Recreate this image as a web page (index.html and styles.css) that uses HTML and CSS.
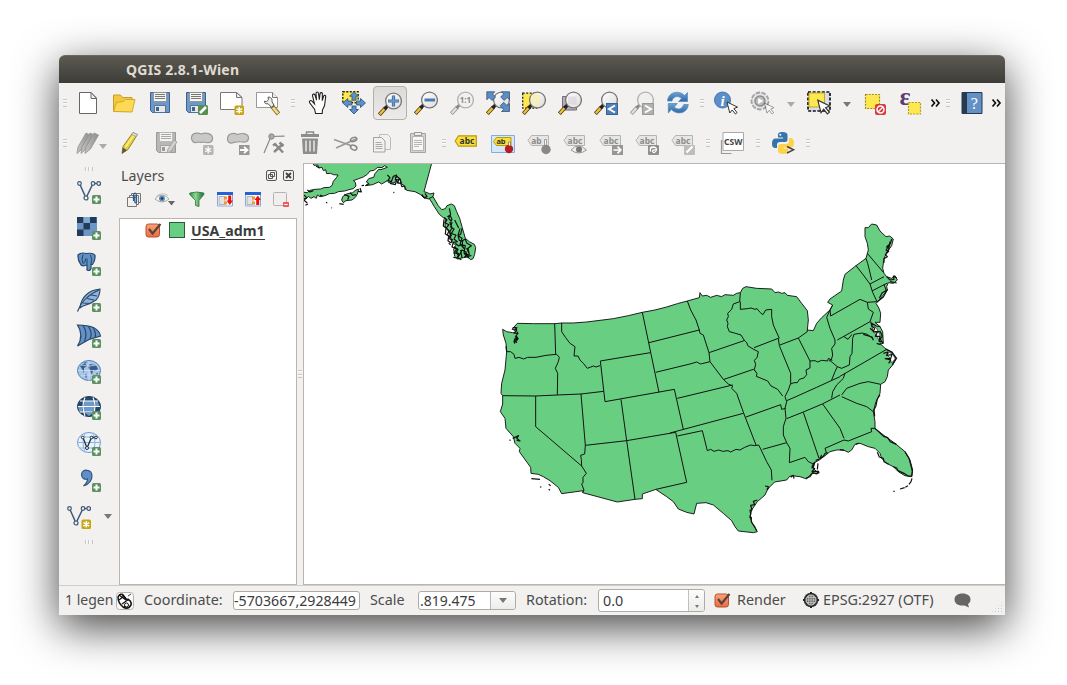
FILE: index.html
```html
<!DOCTYPE html>
<html lang="en">
<head>
<meta charset="utf-8">
<title>QGIS 2.8.1-Wien</title>
<link rel="stylesheet" href="styles.css">
</head>
<body>
<svg class="defs" width="0" height="0" aria-hidden="true">
  <defs>
    <linearGradient id="blue" x1="0" y1="0" x2="0" y2="1"><stop offset="0" stop-color="#6fa0d4"/><stop offset="1" stop-color="#2f69a8"/></linearGradient>
    <linearGradient id="glass" x1="0" y1="0" x2="1" y2="1"><stop offset="0" stop-color="#fff"/><stop offset="1" stop-color="#dcdcda"/></linearGradient>
    <linearGradient id="orange" x1="0" y1="0" x2="0" y2="1"><stop offset="0" stop-color="#f9a27c"/><stop offset="1" stop-color="#ea6c40"/></linearGradient>
    <linearGradient id="graypen" x1="0" y1="0" x2="1" y2="0"><stop offset="0" stop-color="#c4c4c4"/><stop offset="1" stop-color="#8c8c8c"/></linearGradient>
    <linearGradient id="funnel" x1="0" y1="0" x2="1" y2="0"><stop offset="0" stop-color="#2f8a3d"/><stop offset=".4" stop-color="#8ed694"/><stop offset="1" stop-color="#1e6c2e"/></linearGradient>
  </defs>
  <symbol id="plus" viewBox="0 0 24 24"><rect x="15" y="15" width="9" height="9" rx="1.5" fill="#5b9160"/><path d="M19.5 16.5v6M16.500 19.500h6" stroke="#fff" stroke-width="2"/></symbol>
  <symbol id="star" viewBox="0 0 24 24"><rect x="14.500" y="14.500" width="9.500" height="9.500" rx="1.500" fill="#c9a510"/><path d="M19.300 16v6.600M16.400 17.600l5.800 3.400M16.400 21l5.800-3.400" stroke="#fff" stroke-width="1.500"/></symbol>
  <symbol id="lens" viewBox="0 0 24 24"><path d="M1.300 22.700L7.500 16" stroke="#4a4020" stroke-width="4"/><path d="M1.800 22.200L6.500 17" stroke="#f3c033" stroke-width="2.400"/><path d="M6.500 17l3-3" stroke="#222" stroke-width="3.400"/><circle cx="15.500" cy="9" r="7.900" fill="url(#glass)" stroke="#777" stroke-width="1.300"/></symbol>
  <symbol id="lensg" viewBox="0 0 24 24"><path d="M1.300 22.700L7.500 16" stroke="#999" stroke-width="4"/><path d="M1.800 22.200L6.500 17" stroke="#ddd" stroke-width="2.400"/><path d="M6.500 17l3-3" stroke="#888" stroke-width="3"/><circle cx="15.500" cy="9" r="7.900" fill="#f0f0ef" stroke="#b0b0b0" stroke-width="1.300"/></symbol>
  <symbol id="vee" viewBox="0 0 24 24"><path d="M2.500 3.500L9 18 16 3.500h5.500" fill="none" stroke="#3d5a78" stroke-width="1.500"/><g fill="#f2f1f0" stroke="#3d5a78" stroke-width="1.200"><circle cx="2.500" cy="3.500" r="1.800"/><circle cx="9" cy="18" r="2"/><circle cx="16" cy="3.500" r="1.800"/><circle cx="21.700" cy="3.500" r="1.800"/></g></symbol>
  <symbol id="cursor" viewBox="0 0 12 14"><path d="M1 1l2.800 11 2.400-3 3.200 4 1.700-1.400-3.300-4 3.700-1.500z" fill="#fff" stroke="#333" stroke-width="1"/></symbol>
  <symbol id="gtag" viewBox="0 0 24 24"><path d="M1 8.500L4.500 3.500h17v10h-17z" fill="#e6e6e5" stroke="#b4b4b4"/></symbol>
  <symbol id="floppy" viewBox="0 0 24 24"><path d="M2.500 2.500h19v20H4.500l-2-2z" fill="#6d98c9" stroke="#3c6490"/><path d="M5.500 2.500h13v9h-13z" fill="#f6f6f2" stroke="#8a8a86" stroke-width=".8"/><path d="M7 4.500h10M7 6.500h10M7 8.500h10" stroke="#777" stroke-width="1"/><path d="M6.500 15.500h11v7h-11z" fill="#e8e8e6" stroke="#3c6490" stroke-width=".8"/><path d="M8 17h3v4H8z" fill="#3c6490"/></symbol>
  <symbol id="check" viewBox="0 0 17 16"><rect x="1" y="2" width="13.500" height="13" rx="2.500" fill="url(#orange)" stroke="#b55231"/><path d="M4 7l3.600 4.500L15.500 2" fill="none" stroke="#5a4037" stroke-width="2.100"/></symbol>
</svg>

<main class="window">
  <header class="titlebar">QGIS 2.8.1-Wien</header>

  <nav class="toolbar">
    <i class="grip first"></i>
    <span class="slot"><svg class="ic"><path d="M3.500 1.500h11.500l5.500 5.500v15.500h-17z" fill="#fff" stroke="#666"/><path d="M15 1.500v6h5.500z" fill="#eee" stroke="#666"/></svg></span>
    <span class="slot"><svg class="ic"><path d="M1.500 20.500v-16.500h7l2 2.500h9.500v14z" fill="#f2c93c" stroke="#c79f25"/><path d="M1.500 20.500l3-9 7-1 2-2h9.500l-3 12.500z" fill="#fdd956" stroke="#d4aa2c"/></svg></span>
    <span class="slot"><svg class="ic"><use href="#floppy" width="24" height="24" y="-1"/></svg></span>
    <span class="slot"><svg class="ic"><use href="#floppy" width="24" height="24" y="-1"/><rect x="14" y="14" width="10" height="10" rx="1.500" fill="#569050"/><path d="M16 22l6-6" stroke="#fff" stroke-width="2.600"/></svg></span>
    <span class="slot"><svg class="ic"><path d="M.5 1.500h16l5.500 5v12h-21.500z" fill="#fff" stroke="#777"/><path d="M16.500 1.500v5h5.500z" fill="#eee" stroke="#777"/><use href="#star" width="24" height="24"/></svg></span>
    <span class="slot"><svg class="ic"><path d="M.5 1.500h16l5 5v10h-21z" fill="#fff" stroke="#999"/><path d="M16.500 1.500v5h5" fill="#eee" stroke="#777"/><path d="M15.500 14.500l7 8.500" stroke="#8a7635" stroke-width="4.500"/><path d="M17 16.500l5 6" stroke="#f0dc8c" stroke-width="2.700"/><path d="M8.500 10.200l2 .5 2-2-.5-2.500c2.500-.5 4.500 1.500 4 4.500l2 3.500-2.500 2-3.500-3.500c-2 .5-4-.5-3.500-2.500z" fill="#eee" stroke="#444" stroke-width=".9"/></svg></span>
    <i class="grip wide"></i>
    <span class="slot"><svg class="ic hand"><path d="M7.500 22.500l-.8-4-5.200-7c-.6-1.700 1.300-2.600 2.500-1.300l2.500 2.600-2-8.200c0-1.800 2.100-1.900 2.500-.4l1.500 5-.5-7c.2-1.600 2.300-1.600 2.500 0l.8 6.600.8-6.300c.5-1.400 2.300-1 2.300.4l-.2 6.800 1.500-4.700c.6-1.200 2.200-.7 2 .8l-1.200 9-2 4-.3 3.700z" fill="#fff" stroke="#222" stroke-width="1.100"/></svg></span>
    <span class="slot"><svg class="ic"><path d="M0 0h16v12h-16z" fill="#fde84e"/><path d="M.8 .8h15.400v11h-15.400z" fill="none" stroke="#222" stroke-width="1.400" stroke-dasharray="2 1.500"/><g fill="#6090c8" stroke="#335a88" stroke-width=".9"><path d="M12 .7l4.500 4.500h-2.500v4h-4v-4h-2.500zM12 23l4.500-4.500h-2.500v-3.500h-4v3.500h-2.500zM.8 12l5-4.500v2.500h4v4h-4v2.500zM23.500 12l-5-4.500v2.500h-4v4h4v2.500z"/></g></svg></span>
    <span class="slot"><span class="active"><svg class="ic"><use href="#lens" width="24" height="24" y="1"/><path d="M15.500 4.500v11M10 10h11" stroke="#3e6ea5" stroke-width="3.200"/><path d="M15.500 5v10M10.500 10h10" stroke="#6d9bcf" stroke-width="1.500"/></svg></span></span>
    <span class="slot"><svg class="ic"><use href="#lens" width="24" height="24"/><path d="M10.500 9h10.500" stroke="#477bb4" stroke-width="3"/></svg></span>
    <span class="slot"><svg class="ic"><use href="#lensg" width="24" height="24"/><text x="15.500" y="12.300" class="t-one">1:1</text></svg></span>
    <span class="slot"><svg class="ic"><use href="#lens" width="24" height="24"/><g fill="#5e8cc2" stroke="#31567f" stroke-width=".8"><path d="M.8.800h8l-2.200 2.200 3 3-3.500 3.500-3-3-2.300 2.300zM23.500.800h-8l2.200 2.200-3 3 3.500 3.500 3-3 2.300 2.300zM23.500 20.500h-8l2.200-2.200-3.500-3.500 3.500-3.500 3.500 3.500 2.300-2.300z"/></g></svg></span>
    <span class="slot"><svg class="ic"><path d="M.7 2.200h14v15h-14z" fill="#fde84e" stroke="#222" stroke-width="1.300" stroke-dasharray="2 1.500"/><use href="#lens" width="24" height="24"/><path d="M9 5q4-5 9 0v9l-6 .5q-4-3-3-9z" fill="#f7f0a8" opacity=".7"/></svg></span>
    <span class="slot"><svg class="ic"><path d="M4.500 5.500h14v13.500h-14z" fill="#b6acbc" stroke="#766b80"/><use href="#lens" width="24" height="24"/><path d="M10 5.500h8.500v8h-8.500z" fill="#cfc6d3" opacity=".45"/></svg></span>
    <span class="slot"><svg class="ic"><use href="#lens" width="24" height="24"/><rect x="12.500" y="12.500" width="11" height="11" fill="#4c80b8" stroke="#386290"/><path d="M21 14.500l-6 3.500 6 3.500" fill="none" stroke="#fff" stroke-width="2"/></svg></span>
    <span class="slot"><svg class="ic"><use href="#lensg" width="24" height="24"/><rect x="12.500" y="12.500" width="11" height="11" fill="#b1b1b0" stroke="#999"/><path d="M15 14.500l6 3.500-6 3.500" fill="none" stroke="#fff" stroke-width="2"/></svg></span>
    <span class="slot"><svg class="ic"><path d="M1.500 10c.5-9 11.500-11.500 17-5.500l3-3v9h-9l3-3c-3.500-3.500-8.500-2-9.500 2.500z" fill="url(#blue)" stroke="#5287be" stroke-width=".7"/><path d="M22.300 13.500c-.5 9-11.500 11-17 5l-3 3.500v-9.500h9l-3 3.500c3.500 3.500 8 2 9.500-2.500z" fill="url(#blue)" stroke="#5287be" stroke-width=".7"/></svg></span>
    <i class="grip"></i>
    <span class="slot"><svg class="ic"><circle cx="8.500" cy="9" r="8" fill="#5b8fc9" stroke="#447ab2"/><text x="8.500" y="14.500" class="t-info">i</text><use href="#cursor" x="12" y="10" width="12" height="14"/></svg></span>
    <span class="slot"><svg class="ic"><circle cx="10" cy="10" r="8.500" fill="#e4e4e3" stroke="#a3a3a3" stroke-width="1.800" stroke-dasharray="4.500 1.400"/><circle cx="10" cy="10" r="5" fill="#bbb" stroke="#8d8d8d" stroke-width="1.500"/><path d="M8.200 7l5 3-5 3z" fill="#fff"/><use href="#cursor" x="13.500" y="11" width="11" height="13" opacity=".5"/></svg></span>
    <span class="drop pale"></span>
    <span class="slot sel"><svg class="ic"><path d="M1 1h22v19h-22z" fill="#dadde8" stroke="#111" stroke-width="1.700" stroke-dasharray="3 1.600"/><path d="M2 2h15.500v14h-15.500z" fill="#fde84e" stroke="#c1aa29"/><use href="#cursor" x="9" y="8" width="15" height="16"/></svg></span>
    <span class="drop"></span>
    <span class="slot"><svg class="ic"><path d="M2.500 3.500h14v14h-14z" fill="#fde84e" stroke="#9f8a1e" stroke-width="1.200" stroke-dasharray="2 1.200"/><rect x="12" y="13" width="11" height="11" rx="2" fill="#d93a3a"/><circle cx="17.500" cy="18.500" r="3.500" fill="none" stroke="#fff" stroke-width="1.500"/><path d="M15 21l5-5" stroke="#fff" stroke-width="1.300"/></svg></span>
    <span class="slot"><svg class="ic"><text x="6" y="13.500" class="t-eps">ε</text><path d="M9.500 11.500h12v11.500h-12z" fill="#fde84e" stroke="#b29b28" stroke-width="1.200" stroke-dasharray="2 1.200"/></svg></span>
    <svg class="more" viewBox="0 0 13 10"><path d="M2.500 1.500l3 3.500-3 3.500M7 1.500l3 3.500-3 3.500" fill="none" stroke="#111" stroke-width="1.700"/></svg>
    <i class="grip"></i>
    <span class="slot"><svg class="ic"><path d="M2 1.500h20v21h-20z" fill="#6390c5" stroke="#253a52"/><path d="M2 1.500h5v21h-5z" fill="#273b50"/><text x="14.300" y="17.500" class="t-help">?</text></svg></span>
    <svg class="more" viewBox="0 0 13 10"><path d="M2.500 1.500l3 3.500-3 3.500M7 1.500l3 3.500-3 3.500" fill="none" stroke="#111" stroke-width="1.700"/></svg>
  </nav>

  <nav class="toolbar">
    <i class="grip first"></i>
    <span class="slot"><svg class="ic"><g fill="url(#graypen)" stroke="#929292" stroke-width=".8"><path d="M1 22.500l1-6.500 8-14 4 2-8 14z"/><path d="M5 22.500l1-6.500 8-14 4 2-8 14z"/><path d="M9 22.500l1-6.500 8-14 4.500 2-8 14z"/></g></svg></span>
    <span class="drop pen pale"></span>
    <span class="slot"><svg class="ic"><path d="M4 22.500l1-7L15 1.500l4.500 2-9.500 15z" fill="#e5cf3c" stroke="#8b7a22" stroke-width=".9"/><path d="M7.500 16L17 2.500" stroke="#fbf08f" stroke-width="1.500"/><path d="M15 1.500l4.500 2-1.300 2-4.500-2z" fill="#ddd" stroke="#999" stroke-width=".7"/><path d="M4 22.500l.8-6 4.200 2.700z" fill="#555"/></svg></span>
    <span class="slot"><svg class="ic gray"><use href="#floppy" width="24" height="24" y="-1"/><path d="M13 22l1-4 6-9 3 2-6 9z" fill="#bbb" stroke="#777"/></svg></span>
    <span class="slot"><svg class="ic"><path d="M1.500 7c0-5.500 6-5.500 10-4 4-1.500 11-1 11 4.500 0 5-5 4.500-9 3.500-4 1-5-.5-7 .5-3 .5-5-1.500-5-4.500z" fill="#c9c9c8" stroke="#999" stroke-width="1.200"/><rect x="13" y="14" width="10.500" height="10" rx="1.500" fill="#b4b4b4"/><path d="M18.200 15.500v7M15.200 17.200l6 3.500M15.200 20.700l6-3.500" stroke="#fff" stroke-width="1.300"/></svg></span>
    <span class="slot"><svg class="ic"><path d="M1.500 8c0-6 6-6.500 10-4.500 5-2 11-1 11 3.500 0 5-5 4.500-9 3.500-4 1-5 .5-7 1.500-3 .5-5-1-5-4z" fill="#c9c9c8" stroke="#999" stroke-width="1.200"/><rect x="13" y="14" width="10.500" height="10" fill="#979797"/><path d="M14 19h7M18 15.800l3.500 3.200-3.500 3.200" fill="none" stroke="#fff" stroke-width="1.800"/></svg></span>
    <span class="slot"><svg class="ic"><path d="M2 22L9 5.500l13.500-.3" fill="none" stroke="#888" stroke-width="1.200"/><circle cx="9.500" cy="5.500" r="2.700" fill="#aaa" stroke="#888"/><path d="M13 13l8 8.500M21 13l-9 8" stroke="#888" stroke-width="2.400"/><path d="M17.500 11.500l4 3.500M11 14.500l3-2" stroke="#888" stroke-width="2.600"/></svg></span>
    <span class="slot"><svg class="ic"><path d="M8.500 3V1h7v2" fill="none" stroke="#8b8b8b" stroke-width="1.500"/><path d="M3 3h18v3h-18zM4 7.500h16l-1 15.500h-14z" fill="#8d8d8d"/><path d="M8 9.500v11M12 9.500v11M16 9.500v11" stroke="#ddd" stroke-width="1.700"/></svg></span>
    <span class="slot"><svg class="ic"><path d="M0 8.500l18 6.500M2 17L22 8" stroke="#999" stroke-width="1.700"/><ellipse cx="19.500" cy="8.500" rx="3.300" ry="2" fill="none" stroke="#888" stroke-width="1.500" transform="rotate(-20 19.500 8)"/><ellipse cx="19.500" cy="16.500" rx="3.300" ry="2.300" fill="none" stroke="#888" stroke-width="1.500" transform="rotate(25 19.500 17)"/></svg></span>
    <span class="slot"><svg class="ic"><g fill="#f1f1f0" stroke="#bbb"><path d="M9.500 3.500h8l3 3v12h-11z"/><path d="M3.500 6.500h8l3.500 3.500v11h-11.500z" stroke="#a2a2a2"/></g><path d="M5.500 11.500h6M5.500 13.500h7M5.500 15.500h7M5.500 17.500h7" stroke="#aaa"/></svg></span>
    <span class="slot"><svg class="ic"><path d="M4.500 2.500h15v19h-15z" fill="#d2d2d1" stroke="#a5a5a5"/><path d="M6.500 5.500h11v14h-11z" fill="#f7f7f6" stroke="#b5b5b5"/><path d="M8.500 4.500v-3h7v3z" fill="#eee" stroke="#999"/><path d="M8 9.500h8M8 11.500h8M8 13.500h8M8 15.500h5" stroke="#b5b5b5"/></svg></span>
    <i class="grip labels-grip"></i>
    <span class="slot"><svg class="ic"><path d="M1.200 10L4.500 4.800h17.800v10.400h-17.800z" fill="#f8df39" stroke="#b79a0c" stroke-width="1.200"/><text x="13" y="12.700" class="t-abc">abc</text></svg></span>
    <span class="slot shift"><svg class="ic"><path d="M.5 4.500h23v17h-23z" fill="#d8e7f8" stroke="#7daee6"/><path d="M2.500 10.500l3-4h14.500v8h-14.500z" fill="#f8df39" stroke="#b79a0c"/><text x="10" y="13.300" class="t-abc sm">ab</text><circle cx="18" cy="18" r="4.200" fill="#b61f22"/><path d="M17.500 14v-3h2v4" fill="#fff" stroke="#7b6d2c" stroke-width=".7"/></svg></span>
    <span class="slot"><svg class="ic"><use href="#gtag" width="24" height="24" y="1"/><text x="9.500" y="12.500" class="t-abc g">ab</text><path d="M17.500 15V8.500h2v7" fill="#fff" stroke="#888" stroke-width=".8"/><circle cx="19" cy="18.500" r="4.700" fill="#888"/></svg></span>
    <span class="slot"><svg class="ic"><use href="#gtag" width="24" height="24" y="1"/><text x="12" y="12.500" class="t-abc g">abc</text><path d="M8 19q7-8 15.500 0-8 6-15.500 0z" fill="#eee" stroke="#999"/><circle cx="16" cy="18.500" r="3" fill="#777"/></svg></span>
    <span class="slot"><svg class="ic"><use href="#gtag" width="24" height="24" y="1"/><text x="12" y="12.500" class="t-abc g">abc</text><rect x="13" y="14" width="11" height="10" fill="#969696"/><path d="M14.500 19h7M18.500 15.700l3.300 3.300-3.300 3.300" fill="none" stroke="#fff" stroke-width="1.700"/></svg></span>
    <span class="slot"><svg class="ic"><use href="#gtag" width="24" height="24" y="1"/><text x="12" y="12.500" class="t-abc g">abc</text><rect x="13" y="14" width="11" height="10" rx="1" fill="#8e8e8e"/><path d="M15.500 20.500q-1-4 3-4.500 4 .5 2.500 4-2 3-3.500.5 0-2 3-1.500M15 17.500l2-2" fill="none" stroke="#fff" stroke-width="1.300"/></svg></span>
    <span class="slot"><svg class="ic"><use href="#gtag" width="24" height="24" y="1"/><text x="12" y="12.500" class="t-abc g">abc</text><rect x="13" y="14" width="11" height="10" rx="1" fill="#bdbdbd"/><path d="M15.500 21.500l6-6" stroke="#fff" stroke-width="2.200"/></svg></span>
    <i class="grip wide"></i>
    <span class="slot"><svg class="ic"><path d="M1.500 9.500h-1v13h10" fill="none" stroke="#999" stroke-width="1.200"/><path d="M2 1.500h20.500v18h-20.500z" fill="#fff" stroke="#aaa"/><text x="12.300" y="13.500" class="t-csw">CSW</text></svg></span>
    <i class="grip wide"></i>
    <span class="slot"><svg class="ic"><path d="M11.500 1c-4 0-4.500 1.500-4.500 3v2.500h5v1h-7.500c-2.500 0-3.500 2-3.500 5s1 4.500 3.500 4.500h1.500v-3q0-3 3-3h5q2.500 0 2.500-2.500v-4.500c0-2-2-3-5-3z" fill="#3774ab"/><circle cx="9.300" cy="3.700" r="1" fill="#fff"/><path d="M12.500 23c-4 0-5.500-1-5.500-3v-4q0-3 3-3h5q3 0 3-3v-3h1.500c2.500 0 3.500 2 3.500 5s-1 4.500-3.500 4.500h-7v1h5v2.500c0 2-2 3-5 3z" fill="#fdd34a"/><path d="M16 15.500l6.500 3.300-6.500 3.200" fill="none" stroke="#444" stroke-width="1.500"/></svg></span>
    <i class="grip wide"></i>
  </nav>

  <div class="body">
    <aside class="sidebar">
      <i class="vgrip"></i>
      <span class="vslot"><svg class="ic"><use href="#vee" width="24" height="24"/><use href="#plus" width="24" height="24"/></svg></span>
      <span class="vslot"><svg class="ic"><path d="M0 1h20v19h-20z" fill="#6c96c5"/><path d="M0 1h6.500v6h-6.500zM13 1h6.500v6h-6.500zM6.500 7h6.500v6.500h-6.500zM0 13.500h6.500v6.500h-6.500z" fill="#233b5b"/><path d="M6.500 1h6.500v6h-6.500z" fill="#7fa7d1"/><use href="#plus" width="24" height="24"/></svg></span>
      <span class="vslot"><svg class="ic"><path d="M1 3q3-3 8-1.500 8-1 9 2 .5 5-2.500 9l-1.500 0v4q-1 3-4 1.500v-5l-2 .5q-2 1-4-.5Q.5 8 1 3z" fill="#6190c5" stroke="#27466b" stroke-width="1.200"/><path d="M6 2.500q-2 5 0 9 3-1 2.500-5M13.500 3q2 4 .5 9M10 6.500v6" fill="none" stroke="#27466b"/><use href="#plus" width="24" height="24"/></svg></span>
      <span class="vslot"><svg class="ic"><path d="M3 20C4 9 12 2 23 1c0 5-1 8-4 11-4 3-9 5-13 6z" fill="#8fb3db" stroke="#2a4868" stroke-width="1.100"/><path d="M.5 23.500C3 16 10 7 22 2M6 15l7 .5M10 10.500l7 1.500M14 7l6 1" fill="none" stroke="#2a4868" stroke-width="1.200"/><use href="#plus" width="24" height="24"/></svg></span>
      <span class="vslot"><svg class="ic"><path d="M.5 1C12 1 22 4 23.500 12L12 15.500.5 22C5 15 5 8 .5 1z" fill="#6591c4" stroke="#27466b" stroke-width="1.200"/><path d="M6 1.500q5 7 1.500 16M11.500 2.500q4.500 7 1.500 12.500M16.500 4.500q3 5 1.500 9" fill="none" stroke="#27466b" stroke-width="1.200"/><use href="#plus" width="24" height="24"/></svg></span>
      <span class="vslot"><svg class="ic"><ellipse cx="12" cy="10.500" rx="11.500" ry="10" fill="#a8c5e5" stroke="#5180b4"/><path d="M3 6l5-3 2 3-3 2 0 5-2-4zM12 4l7 1 2 4-3 2-2-1-1 5-2-5-2-2zM8 14l2 1-1 4zM19 13l2 0-1 2zM6 3l3-1 1 1z" fill="#375f8d"/><path d="M12 1v20M1 10.500h22M4 5q8 2 16 0M4 16q8-2 16 0" fill="none" stroke="#d5e4f4" stroke-width=".7"/><use href="#plus" width="24" height="24"/></svg></span>
      <span class="vslot"><svg class="ic"><ellipse cx="12" cy="10.500" rx="11.500" ry="10" fill="#27486e" stroke="#1e3854"/><path d="M7 5h10v5h-10zM6.500 11h11v5h-11zM8 17h8l-4 3zM1 11h4.500v5h-3zM18.500 5h2l2 5h-4z" fill="#6d9acb"/><path d="M1 10.500h22M3 5h18M3 16h18M8 1.500Q4 10 8 20M16 1.500Q20 10 16 20" fill="none" stroke="#fff" stroke-width="1.100"/><use href="#plus" width="24" height="24"/></svg></span>
      <span class="vslot"><svg class="ic"><ellipse cx="12" cy="10.500" rx="11.500" ry="10" fill="#eaf2fb" stroke="#6c9bd0"/><path d="M1 10.500h22M3 5h18M3 16h18M8 1.500Q4 10 8 20M16 1.500Q20 10 16 20" fill="none" stroke="#8eb4dd"/><path d="M6 5.500L10 16l4.500-10.500h5" fill="none" stroke="#1f3043" stroke-width="1.300"/><g fill="#fff" stroke="#1f3043"><circle cx="5.700" cy="5.500" r="1.300"/><circle cx="10" cy="16" r="1.500"/><circle cx="14.500" cy="5.500" r="1.300"/><circle cx="19" cy="5.500" r="1.300"/></g><use href="#plus" width="24" height="24"/></svg></span>
      <span class="vslot"><svg class="ic"><path d="M4.500 6.500c0-6 10.500-6 10.500 1.500 0 5-4 8.500-8.500 10 3-2.500 4-4.500 4-7-3 1-6-1-6-4.500z" fill="#5e8fc8" stroke="#2d5078" stroke-width="1.100"/><use href="#plus" width="24" height="24"/></svg></span>
      <span class="vslot menu"><svg class="ic"><use href="#vee" width="24" height="24"/><use href="#star" width="24" height="24"/></svg><b class="tri"></b></span>
      <i class="vgrip low"></i>
    </aside>

    <section class="dock">
      <div class="dock-title"><span>Layers</span>
        <svg class="dbtn" viewBox="0 0 11 11"><rect x=".5" y=".5" width="10" height="10" rx="1.500" fill="none" stroke="#555"/><path d="M4.500 2.500h4v4h-4zM2.500 4.500h4v4h-4z" fill="none" stroke="#555"/></svg>
        <svg class="dbtn" viewBox="0 0 11 11"><rect x=".5" y=".5" width="10" height="10" rx="1.500" fill="none" stroke="#555"/><path d="M3 3l5 5M8 3l-5 5" stroke="#444" stroke-width="1.900"/></svg>
      </div>
      <div class="dock-tools">
        <svg viewBox="0 0 20 16"><g fill="#f2f1f0" stroke="#777"><path d="M6.500 1.500h9v9h-9z"/><path d="M4.500 3.500h9v9h-9z"/><path d="M2.500 5.500h9v9h-9z"/></g><path d="M8.500 9V3q1.500-4 3 0v7q-1 2-1.700 0V4" fill="none" stroke="#295b91" stroke-width="1.200"/></svg>
        <svg class="eye" viewBox="0 0 20 16"><path d="M0 7q7-8 14 0-7 6-14 0z" fill="#f6f6f6" stroke="#aaa"/><path d="M1 4.500q6-5 12-1" fill="none" stroke="#c5c3c0"/><circle cx="7" cy="6.500" r="3" fill="#6790bb"/><circle cx="7" cy="6.500" r="1.300" fill="#1e3a55"/><path d="M13 9h7l-3.500 4.500z" fill="#666"/></svg>
        <svg class="filter" viewBox="0 0 20 16"><path d="M2 1.500q8-2 16 0v1.500l-5.500 6v6l-4-1v-5l-6.500-6z" transform="translate(1 -.5) scale(.88 1)" fill="url(#funnel)" stroke="#22713a" stroke-width=".8"/></svg>
        <svg viewBox="0 0 20 16"><path d="M2.500 .5h15v13.500h-15z" fill="#fdfdfd" stroke="#8ba9d8"/><path d="M2 0h16v3h-16z" fill="#2563d4"/><path d="M4 4.500h6v8h-6z" fill="#e3e3e3" stroke="#999" stroke-width=".7"/><path d="M9 4.500h3v3h-3zM9 9.500h3v3h-3z" fill="#f59533"/><path d="M14.700 3.500v6" stroke="#e81010" stroke-width="3"/><path d="M11.500 8.500h6.500l-3.200 4.500z" fill="#e81010"/></svg>
        <svg viewBox="0 0 20 16"><path d="M2.500 .5h15v13.500h-15z" fill="#fdfdfd" stroke="#8ba9d8"/><path d="M2 0h16v3h-16z" fill="#2563d4"/><path d="M4 4.500h6v8h-6z" fill="#e3e3e3" stroke="#999" stroke-width=".7"/><path d="M9 4.500h3v3h-3zM9 9.500h3v3h-3z" fill="#f59533"/><path d="M14.700 7v6" stroke="#e81010" stroke-width="3"/><path d="M11.500 8h6.500l-3.200-4.500z" fill="#e81010"/></svg>
        <svg viewBox="0 0 20 16"><rect x="2.500" y=".5" width="13" height="13" rx="1" fill="#f0efee" stroke="#b4b3b1"/><rect x="12" y="10" width="6" height="5" rx="1" fill="#ed5353"/><path d="M13.200 12.500h3.600" stroke="#fff" stroke-width="1.200"/></svg>
      </div>
      <div class="tree"><div class="layer"><svg class="chk"><use href="#check" width="17" height="16"/></svg><i class="swatch"></i><span class="lname">USA_adm1</span></div></div>
    </section>

    <div class="splitter"><i class="grip"></i></div>

    <section class="canvas">
      <svg class="map" viewBox="304 164 701 420">
        <!-- Alaska -->
        <g transform="translate(300 160) scale(.33333)" class="land">
          <path d="M36 6L42 16 53 15 57 24 66 22 70 32 77 29 80 41 92 40 100 44 114 45 110 52 100 64 96 77 88 82 72 83 62 87 45 88 30 91 22 98 6 96V116L20 115 25 109 33 115 42 110 49 115 52 105 60 110 75 107 88 101 104 100 115 95 134 93 150 88 160 86 168 78 166 67 160 62 176 56 190 51 202 43 210 33 222 31 233 22 246 23 254 17 262 22 243 29 236 28 225 41 221 52 206 56 199 66 206 70 196 77 218 74 236 66 245 72 262 62 266 68 282 69 289 60 285 53 293 50 301 58 302 70 312 76 320 91 345 95 362 104 372 114 387 117 399 110 402 99 390 102 382 98 372 95 396 6z"/>
          <path d="M388 115l11-5 16 27 10 12 11-3 5-9 13-5 9 5 7 18 9 20 7 25 10 35 12 10 15 8 4 10-3 20-5 13-7 3-9-8-13 2-18 4-8-8-3-21 6-12-13-13-5-24-14-21 1-20-18-15-15-23z"/>
          <path d="M128 110l12-8 18-4 10-8 8-2-4 14-6 10-10 8-18 2-8 6-5-8z"/>
          <g class="scribble">
            <path d="M433 172l8 8-6 8 12 6-8 10 8 8-5 12 10 8-2-18 6-10-6-16 6-10-6-12-8 4M448 145l4 18-6 12 10 12-4 14 10 6-8 14 14 4-6 12 10 8-12 2-4 14 14 6-8 12 14 2-4 12 12 6M432 178l-2 20 8 6-2 18 10 6-2 14 8 6M486 205l-4 18-8 4 4 14 10 2-2 16 8 8M455 225l-10 10 12 4-4 10M480 205l-6 22 12 8-6 18 16 4-4 22 10 4-8 8 14-8-4-18 10-8-14-8-4-12-10 6M462 260l12 8-6 10 10 8 8-16 12 6 4 14 12-4M464 180l12 24M460 292l12 2M466 250l10 8 10-4 6 12M470 272l6 20M482 270l4 24M492 280l14 14M500 264l8 18M446 250l6 4"/>
            <path d="M262 45l8 8-6 8 10 4 6-16 10-4-4 14 12-2-6 12 12 0-4-12-12-10M270 70l16 4 4-14 8 12M12 105l8 8-8 8 10 8M16 136l8-4M118 131l13 2M79 126l2 4M94 143l2 1M280 98l3-1M133 103l14 6-4 10M150 98l8 8 10-2M180 84l4 12-10-2M185 77l7-1M200 75l8-4M302 70l4 10 8-2 2 12M365 103l8 10 8-3-6-10M22 90l8 6 10-4M58 24l-10-6M60 105l8 4"/>
          </g>
        </g>
        <!-- Contiguous states -->
        <g transform="translate(490 280) scale(.33333)" class="land">
          <path d="M38 148L50 155 68 158 84 161 78 150 66 148 75 138 82 130 130 131 195 131 215 129 250 129 290 126 330 121 370 116 415 107 457 97 495 90 530 81 562 71 592 63 628 53 630 38 637 48 650 46 662 52 680 46 695 50 705 44 730 46 740 40 751 38 758 25 768 20 800 25 845 27 855 38 865 36 875 40 885 38 892 46 920 50 935 70 952 92 955 120 952 150 970 152 980 130 995 113 1020 90 1028 75 1013 67 1020 57 1055 33 1060 0 1065-17 1098-43 1128-65 1135-90 1132-110 1125-130 1125-157 1135-157 1145-168 1160-165 1170-147 1188-130 1199-132 1210-123 1205-103 1192-85 1182-65 1178-35 1182-20 1190-10 1205-5 1215-13 1222 0 1210 10 1195 8 1190 20 1192 30 1180 45 1168 60 1158 70 1167 85 1172 100 1170 127 1155 127 1170 140 1178 155 1180 190 1170 190 1185 205 1200 213 1220 235 1208 255 1195 270 1192 290 1185 305 1172 313 1170 340 1158 365 1150 395 1155 425 1155 445 1180 465 1215 490 1245 515 1260 540 1268 570 1265 590 1245 587 1225 575 1210 560 1190 550 1175 535 1170 520 1155 505 1135 500 1110 490 1095 493 1085 510 1075 517 1060 510 1040 510 1020 515 1008 525 988 540 970 550 970 565 985 580 965 580 950 597 930 590 906 587 898 590 890 600 854 606 840 620 832 630 825 645 802 665 785 690 780 712 787 730 802 755 790 758 745 753 735 740 725 722 700 700 670 675 648 668 620 670 612 702 590 697 565 687 550 665 530 650 500 630 498 628 457 642 457 656 435 658 382 666 278 638 280 632 215 641 205 622 180 602 160 590 145 583 123 580 122 562 88 515 90 505 75 490 70 470 48 445 45 415 31 395 38 372 38 347 33 340 35 310 45 270 50 215 48 190 40 165z"/>
        </g>
        <g transform="translate(490 280) scale(.33333)" class="border">
          <path d="M50 215l12 0 10 8 3 12 12-3 14 5 12-5 25 0 30-6 32-3 8 9-3 13-9 20 7 15-1 65M194 131l3 92M215 129l0 26 12 18 13 17 15 10-3 28 12 0 6 12 10 10 12 15 18-7 8 3 12-4M331 243l150-25M457 97l50 240M331 243l14 122 208-37M38 347l99 1 66-3 70-3 68-8M137 348v92l138 118 14 22-10 12 0 16-4 4 7 18-4 8M273 342l13 154-2 26-12 4 2 12 1 20M286 496l124-14 147-25M393 358l17 124 25 176M553 328l27 120M557 457l33 150-92 21M477 188l151-38M497 277l103-25 20-6 12 6 28-7"/>
          <path class="scribble" d="M68 143l10 0 2 8-8 8 12 0-8 12 8 4-10 6 6 6-8-4 2 8M72 152l10-10M72 178l10-4M78 165l6 12-8 10M50 215l-2-16M68 475l18-8-6 8 10 8-10-2M58 480l4 1M124 596l26 2M150 620l4 2M176 613l6 4M176 628l4 3"/>
        </g>
        <g transform="translate(670 280) scale(.33333)" class="border">
          <path d="M52 63l10 27 16 30 10 30 2 10 10 5 17 53 3 27 15 20 25 33 15 14 13 6-3 7 15 15 22 62 36 93M117 218l108-37M162 298l88-30 10 10M211 38l-2 27-19 7-5 16-12 12 2 10-5 10 4 10-2 10 6 15 15 4 20 6 10 16 8 8 2 8 16 10 16 8-4 18-8 8 4 12-4 16 8 12-2 8 34 14 10 15 20 10 15 20M211 65v23l22-2 10-2 12 4 6-2 10 12 8 6 8-14 18-2 0 22 5 25 18 40M252 203l73-28 3 22 34 83 0 30-7 20-10 20M330 195l55-21 27-19 0-5M385 174l35 69M362 312l10-4 10 0 6-10 14-4 8-10-2-14 12-6 0-21 15-1 8 4 12-5 18 2 2-8 12 6M22 355l166-40M0 459l220-59M228 411l104-37 3 14 12-3M22 468l75-16 15 60 10-4 10 6 14-4 12 4 16-2 8 4 16-8 12 2 14-8 18-7 12 2 12-2 6 12 18 38 14 25 2 31M278 508l72-20M345 350l5 15-5 20 3 30-8 25 0 25 10 23 10 17-2 43 47-16 10 13 15 7M350 362l28-12 62-28 70-32M350 416l50-20 57-24 53-27M400 397l30 88 17 50"/>
          <path class="scribble" d="M432 548l-6 12 8 6-8 8 20 0-6 8-12-4-8 12-12 4M444 550l-2 18M285 618l10 2-4 10M262 660l-12 4 4 10-12 2 4 14-6 0 2 12-2 10 4 0 0 14 10 14 6 12M455 525l-6 12-12 4M362 592l8-6 2 10"/>
        </g>
        <g transform="translate(780 215) scale(.33333)" class="border">
          <path d="M158 270l-8 15-10 22 10 33 15 35 0 12-10 13 3 20-4 14-6 4M150 285l2 18 88-50 22 9M172 375l98-55 10-28-15-10-3-20 28-2M228 152l22 28 20 27 8 25 12 26M258 130l5 15 5 20 7 30M262 115l48 57M270 207l42-22M276 228l46-24M312 208l6 17M180 484l140-81M195 475l-5 15-20 20-12 20-3 20M155 495l10-25 7-15-24-20M172 455l13 5 23-10 2-25 6-10 2-45 4-12 24-4 16 4 18 14M192 365l12 8 12-15M185 540l15-20 40-15 25-5 37 8M185 545l45 20 30 10 20 15M128 567l52 73 12 30M135 700l57-25 13 3 70-28-2-10 12 0M135 700l5 15"/>
          <path class="white" d="M274 328l16 12 10 20-2 20-6-16-12-14zM328 412l12 8 6 12-12 12-4-16-10-8z"/>
          <path class="scribble" d="M318 95l6 2-6 8 8 4-10 10 6 6-10 6 0 12M335 72l-4 14-8 6 4 8M330 80l-4 24-8 12M320 185l10 10 12-2-2-10 10 6M330 200l20 4M290 262l20-16 12-22-16 10-8 16M272 320l4 14 8 6-4 10 12 2-6 12 14 0-2 16 10 0M275 325l14 8 12 2M285 350l16 0 6 14-6 8 8 14M270 340l12 10M290 385l12 4M310 415l14-4-4 10 16-2-4 12-16 0 16 4-6 10M318 403l18 8 13 18-12 20M300 540l-8 12-4 20-6 12 2 20M285 640l26 24 12 4 8 12 18 8M292 712l6 14 12 4 2 10 14 8M375 710l12 20 8 30 2 10-2 14M340 755l10 4 4 8 18 8 12 8 10 0M360 822l14-4M376 817l8-5M387 808l6-8 3-10M340 829l4 0M120 730l10-6 6-10 8 0M105 740l-4 14-6 6M110 768l8 6M228 688l8-4M180 704l12 2M250 358l26 8 4 10"/>
        </g>
      </svg>
    </section>
  </div>

  <footer class="status">
    <span class="st legend">1 legen</span>
    <svg class="mouse" viewBox="0 0 18 18"><rect x=".5" y=".5" width="17" height="17" rx="3" fill="#fafafa" stroke="#b5b2ae"/><path d="M2 5q2-4 5-2l3 4q6 1 5 6-3 5-8 2-5-4-5-10z" fill="#fff" stroke="#111" stroke-width="1.500"/><path d="M3 3l7 5M6 2l4 5M3 8l5-4M6 12l7-5M8 15l4-3" stroke="#111" stroke-width="1.300"/><circle cx="10.500" cy="13" r="2" fill="#fff" stroke="#111"/><path d="M12 4l3-2" stroke="#444"/></svg>
    <span class="st coord">Coordinate:</span>
    <span class="field coordf">-5703667,2928449</span>
    <span class="st scale">Scale</span>
    <span class="field combo"><span class="num">.819.475</span><span class="cbtn"><b class="tri"></b></span></span>
    <span class="st rot">Rotation:</span>
    <span class="field spin"><span class="val">0.0</span><span class="arrows"><b class="up"></b><b class="down"></b></span></span>
    <svg class="chk rchk"><use href="#check" width="17" height="16"/></svg>
    <span class="st render">Render</span>
    <svg class="crs" viewBox="0 0 16 16"><circle cx="8" cy="8" r="7.300" fill="#333"/><circle cx="8" cy="8" r="5" fill="#666" stroke="#eee" stroke-width=".8"/><path d="M8 3v10M3 8h10M4 5.500h8M4 10.500h8M5.700 4v8M10.300 4v8" stroke="#ddd" stroke-width=".6"/><path d="M0 8h2M14 8h2M8 0v2M8 14v2" stroke="#222" stroke-width="2"/></svg>
    <span class="st epsg">EPSG:2927 (OTF)</span>
    <svg class="bubble" viewBox="0 0 17 15"><path d="M8.500 .5c5 0 8 2.500 8 6 0 2-1 3.500-2.500 4.500l1 3.500-4.500-2c-7 .8-10-2.500-10-6s3-6 8-6z" fill="#666"/></svg>
    <i class="resize"></i>
  </footer>
</main>
</body>
</html>
```
FILE: styles.css
```css
* { box-sizing: border-box; }
body {
  margin: 0;
  width: 1067px;
  height: 685px;
  overflow: hidden;
  background: #fff;
  padding: 55px 0 0 59px;
  font-family: "Noto Sans", "Open Sans", sans-serif;
  font-size: 14px;
  color: #4c4c4c;
}
.defs { display: block; height: 0; }
svg { flex: none; display: block; overflow: visible; }
.window {
  width: 946px;
  height: 560px;
  display: flex;
  flex-direction: column;
  background: #f2f1f0;
  border-radius: 6px 6px 0 0;
  box-shadow: 0 12px 44px rgba(0, 0, 0, .74);
}
.titlebar {
  height: 28px;
  flex: none;
  padding-left: 67px;
  border-radius: 6px 6px 0 0;
  background: linear-gradient(#5c5a52, #3d3c37);
  border-top: 1px solid #6a685f;
  color: #dfdbd2;
  font-weight: 700;
  font-size: 14px;
  letter-spacing: .25px;
  line-height: 28px;
}
.toolbar { display: flex; height: 40px; flex: none; align-items: center; }
.slot { width: 36px; flex: none; display: flex; justify-content: center; }
.sel { width: 35px; }
.shift { margin-left: 1px; }
.ic { width: 24px; height: 24px; }
.hand { margin-left: 3px; }
.gray { filter: grayscale(1); opacity: .6; }
.grip { width: 12px; height: 9px; flex: none; display: flex; justify-content: center; }
.grip::before {
  content: "";
  width: 4px;
  height: 8px;
  background: repeating-linear-gradient(#c9c7c3 0 1px, #fbfbfa 1px 2px, transparent 2px 3.500px);
}
.grip.first { width: 11px; }
.grip.wide { width: 14px; }
.grip.labels-grip { padding-left: 3px; }
.active {
  width: 34px;
  height: 34px;
  margin: -5px -2px;
  flex: none;
  display: flex;
  align-items: center;
  justify-content: center;
  border: 1px solid #b3b0ab;
  border-radius: 4px;
  background: linear-gradient(#dddbd8, #ecebe9);
}
.drop { width: 21px; display: flex; justify-content: center; padding-top: 2px; }
.drop::before, .tri {
  content: "";
  width: 0;
  height: 0;
  border: 4px solid transparent;
  border-top: 5px solid #777;
  border-bottom: 0;
}
.drop.pale::before { border-top-color: #aaa; }
.drop.pen { width: 6px; margin-left: -6px; margin-right: 6px; padding-top: 6px; }
.more { width: 13px; height: 10px; }
.t-one { font: 700 8px "Noto Sans", sans-serif; text-anchor: middle; fill: #888; }
.t-info { font: italic 700 15px "Liberation Serif", serif; text-anchor: middle; fill: #fff; }
.t-eps { font: 700 26px "Liberation Serif", serif; text-anchor: middle; fill: #5d3d70; }
.t-help { font: 16px "Liberation Serif", serif; text-anchor: middle; fill: #fff; }
.t-abc { font: 700 8.500px "Noto Sans", sans-serif; text-anchor: middle; fill: #333; }
.t-abc.sm { font-size: 7.500px; }
.t-abc.g { fill: #8c8c8c; }
.t-csw { font: 700 8.500px "Noto Sans", sans-serif; text-anchor: middle; fill: #444; }

.body { display: flex; height: 422px; flex: none; }
.sidebar { width: 60px; display: flex; flex-direction: column; align-items: center; }
.vgrip {
  width: 8px;
  height: 4px;
  margin: 4px 0 3px;
  flex: none;
  background: repeating-linear-gradient(90deg, #c9c7c3 0 1px, #fbfbfa 1px 2px, transparent 2px 3.500px);
}
.vgrip.low { margin-top: 5px; }
.vslot { height: 36px; flex: none; display: flex; align-items: center; }
.vslot.menu { width: 60px; padding-left: 8px; gap: 13px; height: 37px; }
.dock { width: 178px; display: flex; flex-direction: column; }
.dock-title { height: 25px; display: flex; align-items: center; gap: 6px; padding: 0 3px 0 2px; flex: none; font-size: 14.200px; }
.dock-title span { flex: 1; }
.dbtn { width: 11px; height: 11px; }
.dock-tools { height: 30px; display: flex; gap: 8px; padding: 4px 0 0 6px; flex: none; }
.dock-tools svg { width: 20px; height: 16px; }
.dock-tools .eye { margin-left: 2px; }
.dock-tools .filter { margin-left: 4px; }
.tree { flex: 1; border: 1px solid #b9b6b1; background: #fff; padding: 3px 0 0 25px; }
.layer { display: flex; align-items: center; height: 18px; }
.chk { width: 17px; height: 16px; margin-top: -2px; }
.swatch { width: 16px; height: 16px; margin: -2px 6px 0 7px; background: #68cf82; border: 1px solid #2d5c39; }
.lname { font-weight: 700; color: #3c3c3c; line-height: 17px; font-size: 14.200px; border-bottom: 1px solid #3c3c3c; }
.splitter { width: 6px; display: flex; align-items: center; justify-content: center; }
.canvas { width: 702px; border: 1px solid #b9b6b1; border-right: 0; background: #fff; overflow: hidden; }
.map { width: 701px; height: 420px; }
.land { fill: #68cf82; stroke: #111; stroke-width: 2.800; stroke-linejoin: round; }
.border { fill: none; stroke: #111; stroke-width: 3; stroke-linejoin: round; }
.scribble { fill: none; stroke: #111; stroke-width: 3.600; }
.white { fill: #fff; stroke-width: 2; }

.status { height: 30px; display: flex; align-items: center; border-top: 1px solid #cfcdc9; padding-left: 6px; flex: none; position: relative; font-size: 14.350px; }
.st { white-space: nowrap; line-height: 20px; flex: none; padding-bottom: 2px; }
.legend { width: 51px; font-size: 14px; }
.mouse { width: 18px; height: 18px; }
.coord { width: 99px; padding-left: 10px; }
.field { flex: none; display: flex; background: #fff; border: 1px solid #aeaba6; border-radius: 3px; color: #3c3c3c; white-space: nowrap; }
.coordf { width: 127px; height: 19px; line-height: 18px; font-size: 14.200px; }
.scale { width: 58px; padding-left: 10px; }
.combo { width: 98px; height: 19px; line-height: 17px; font-size: 14px; }
.num { flex: 1; padding-left: 1px; }
.cbtn { width: 25px; border-left: 1px solid #b9b6b1; border-radius: 0 3px 3px 0; background: linear-gradient(#fdfdfd, #ececea); display: flex; align-items: center; justify-content: center; }
.rot { width: 82px; padding-left: 10px; }
.spin { width: 107px; height: 23px; line-height: 22px; }
.val { flex: 1; padding-left: 4px; }
.arrows { width: 16px; border-left: 1px solid #c3c0bc; border-radius: 0 3px 3px 0; background: linear-gradient(#fdfdfd, #ececea); display: flex; flex-direction: column; align-items: center; justify-content: space-between; padding: 5px 0 3px; }
.up, .down { width: 0; height: 0; border: 2.500px solid transparent; }
.up { border-top: 0; border-bottom: 3px solid #777; }
.down { border-bottom: 0; border-top: 3px solid #777; }
.rchk { margin-left: 9px; }
.render { width: 72px; padding-left: 6px; }
.crs { width: 16px; height: 16px; margin-top: -2px; }
.epsg { width: 135px; padding-left: 4px; }
.bubble { width: 17px; height: 15px; }
.resize {
  position: absolute;
  right: 2px;
  bottom: 2px;
  width: 12px;
  height: 12px;
  background: radial-gradient(circle, #c9c7c3 0 .8px, transparent 1px) 0 0 / 3px 3px;
  clip-path: polygon(100% 0, 100% 100%, 0 100%);
}
```
